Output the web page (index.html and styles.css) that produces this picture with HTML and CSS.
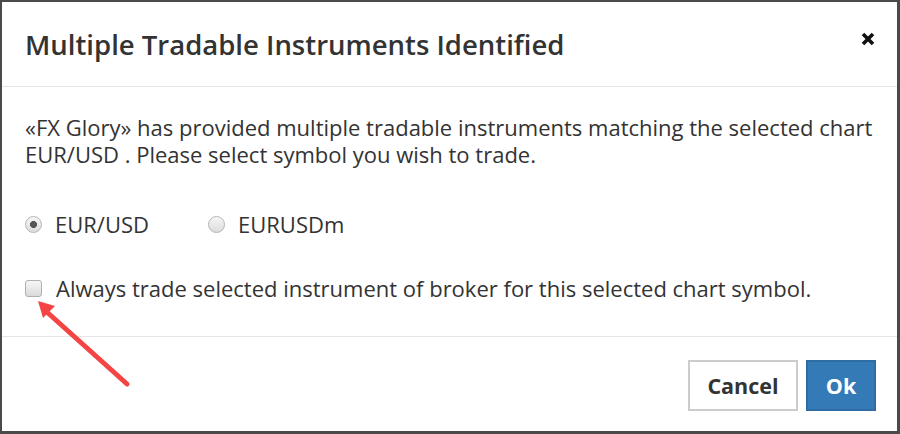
FILE: index.html
```html
<!DOCTYPE html>
<html>
<head>
<meta charset="utf-8">
<link rel="stylesheet" href="styles.css">
</head>
<body>
<div class="modal">
  <div class="modal-header">
    <h4 class="modal-title">Multiple Tradable Instruments Identified</h4>
    <button class="close" aria-label="Close">
      <svg width="14" height="14" viewBox="0 0 14 14"><path d="M2 2 L12 12 M12 2 L2 12" stroke="#111" stroke-width="3.6" stroke-linecap="butt"/></svg>
    </button>
  </div>
  <div class="modal-body">
    <p class="message">«FX Glory» has provided multiple tradable instruments matching the selected chart EUR/USD . Please select symbol you wish to trade.</p>
    <div class="radios">
      <label class="opt"><input type="radio" name="sym" checked><span>EUR/USD</span></label>
      <label class="opt"><input type="radio" name="sym"><span>EURUSDm</span></label>
    </div>
    <label class="check"><input type="checkbox"><span>Always trade selected instrument of broker for this selected chart symbol.</span></label>
  </div>
  <div class="modal-footer">
    <button class="btn btn-default">Cancel</button>
    <button class="btn btn-primary">Ok</button>
  </div>
  <svg class="arrow" width="140" height="100" viewBox="0 0 140 100">
    <line x1="125" y1="83" x2="46" y2="12" stroke="#f44444" stroke-width="5" stroke-linecap="round"/>
    <polygon points="36,0 53,5 41,17" fill="#f44444"/>
  </svg>
</div>
</body>
</html>
```

FILE: styles.css
```css
html, body {
  margin: 0;
  padding: 0;
}
body {
  background: #4a4a4a;
  width: 900px;
  height: 434px;
  overflow: hidden;
  font-family: "Open Sans", "DejaVu Sans", sans-serif;
  color: #333;
}
.modal {
  position: relative;
  margin: 2px 3px 0 2px;
  height: 429px;
  background: #fff;
  display: flex;
  flex-direction: column;
}
.modal-header {
  height: 84px;
  border-bottom: 1px solid #e5e5e5;
  display: flex;
  align-items: center;
  justify-content: space-between;
  padding: 0 22px 0 23px;
}
.modal-title {
  margin: 0;
  font-size: 27.5px;
  font-weight: 600;
  color: #333;
}
.close {
  border: 0;
  background: none;
  padding: 0;
  margin: 0 0 10px 0;
  width: 14px;
  height: 14px;
  display: flex;
}
.modal-body {
  padding: 0 23px;
  height: 249px;
  display: flex;
  flex-direction: column;
  font-size: 22px;
}
.message {
  margin: 27px 0 0 0;
  line-height: 27px;
}
.radios {
  display: flex;
  margin-top: 41px;
  height: 30px;
  align-items: center;
}
.opt {
  display: flex;
  align-items: center;
  width: 183px;
}
.opt input {
  appearance: none;
  -webkit-appearance: none;
  width: 17px;
  height: 17px;
  margin: 0 13px 0 0;
  border-radius: 50%;
  border: 1px solid #b5b5b5;
  background: radial-gradient(circle at 50% 50%, #555 0 3.2px, transparent 3.8px), linear-gradient(#f6f6f6, #dcdcdc);
  box-sizing: border-box;
}
.opt input:not(:checked) {
  background: linear-gradient(#f6f6f6, #dcdcdc);
}
.check {
  display: flex;
  align-items: center;
  margin-top: 34px;
  height: 30px;
}
.check input {
  appearance: none;
  -webkit-appearance: none;
  width: 17px;
  height: 17px;
  margin: 0 14px 0 0;
  border-radius: 3px;
  border: 1px solid #b0b0b0;
  background: linear-gradient(#f7f7f7, #dadada);
  box-sizing: border-box;
}
.modal-footer {
  border-top: 1px solid #e5e5e5;
  flex: 1;
  display: flex;
  justify-content: flex-end;
  align-items: flex-start;
  padding: 23px 21px 0 0;
  gap: 8px;
}
.btn {
  height: 51px;
  font-family: "Open Sans", "DejaVu Sans", sans-serif;
  font-size: 21.5px;
  font-weight: 700;
  border-radius: 0;
  padding: 0;
  box-sizing: border-box;
}
.btn-default {
  width: 110px;
  background: #fff;
  color: #333;
  border: 2px solid #cccccc;
}
.btn-primary {
  width: 70px;
  background: #337ab7;
  color: #fff;
  border: 2px solid #2e6da4;
}
.arrow {
  position: absolute;
  left: 0;
  top: 299px;
}
```
